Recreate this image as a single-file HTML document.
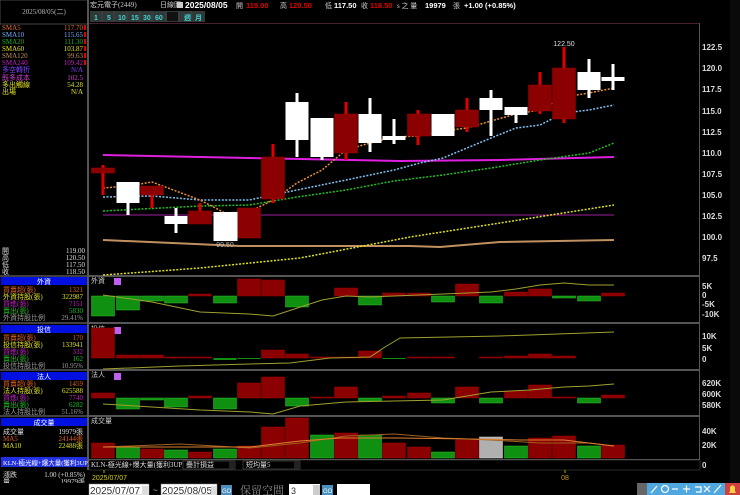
<!DOCTYPE html>
<html><head><meta charset="utf-8"><style>
html,body{margin:0;padding:0;background:#000;width:740px;height:495px;overflow:hidden}
svg{display:block;font-family:"Liberation Sans","Noto Sans CJK TC",sans-serif}
.m{font-family:"Liberation Serif","Noto Sans CJK TC",serif;font-size:7px}
.ax{font-size:8px;fill:#ddd;font-weight:bold}
.hv{font-size:7.5px;font-weight:bold}
</style></head><body>
<svg width="740" height="495" viewBox="0 0 740 495">
<rect width="740" height="495" fill="#000"/>
<rect x="0" y="0" width="88" height="24" fill="#000" stroke="#444" stroke-width="1"/>
<line x1="88" y1="0" x2="88" y2="470" stroke="#555" stroke-width="2"/>
<text x="44" y="14" class="m" fill="#bbb" text-anchor="middle">2025/08/05(二)</text>
<g class="m">
<text x="2" y="30" fill="#e07030">SMA5</text><text x="83" y="30" fill="#e07030" text-anchor="end">117.70</text>
<text x="2" y="37" fill="#70b0ff">SMA10</text><text x="83" y="37" fill="#70b0ff" text-anchor="end">115.65</text>
<text x="2" y="44" fill="#20b020">SMA20</text><text x="83" y="44" fill="#20b020" text-anchor="end">111.30</text>
<text x="2" y="51" fill="#e0e020">SMA60</text><text x="83" y="51" fill="#e0e020" text-anchor="end">103.87</text>
<text x="2" y="58" fill="#c09060">SMA120</text><text x="83" y="58" fill="#c09060" text-anchor="end">99.63</text>
<text x="2" y="65" fill="#c020c0">SMA240</text><text x="83" y="65" fill="#c020c0" text-anchor="end">109.42</text>
<text x="2" y="72" fill="#8040ff">多空轉折</text><text x="83" y="72" fill="#8040ff" text-anchor="end">N/A</text>
<text x="2" y="80" fill="#d040d0">既多成本</text><text x="83" y="80" fill="#d040d0" text-anchor="end">102.5</text>
<text x="2" y="87" fill="#e0e020">多出觸線</text><text x="83" y="87" fill="#e0e020" text-anchor="end">54.28</text>
<text x="2" y="94" fill="#e0e020">出場</text><text x="83" y="94" fill="#e0e020" text-anchor="end">N/A</text>
</g>
<g fill="#e00000"><rect x="84" y="25" width="2" height="5"/><rect x="84" y="32" width="2" height="5"/><rect x="84" y="39" width="2" height="5"/><rect x="84" y="46" width="2" height="5"/><rect x="84" y="53" width="2" height="5"/><rect x="84" y="60" width="2" height="5"/></g>
<g class="m" fill="#ddd">
<text x="2" y="253">開</text><text x="85" y="253" text-anchor="end">119.00</text>
<text x="2" y="260">高</text><text x="85" y="260" text-anchor="end">120.50</text>
<text x="2" y="267">低</text><text x="85" y="267" text-anchor="end">117.50</text>
<text x="2" y="274">收</text><text x="85" y="274" text-anchor="end">118.50</text>
</g>
<line x1="0" y1="276" x2="88" y2="276" stroke="#555" stroke-width="1.5"/>
<g class="m">
<rect x="1" y="277" width="86" height="8" fill="#0010e0"/><text x="44" y="284" fill="#fff" text-anchor="middle">外資</text>
<text x="3" y="292" fill="#e06020">買賣超(張)</text><text x="83" y="292" fill="#e06020" text-anchor="end">1321</text>
<text x="3" y="299" fill="#e0e020">外資持股(張)</text><text x="83" y="299" fill="#e0e020" text-anchor="end">322987</text>
<text x="3" y="306" fill="#c020c0">買進(張)</text><text x="83" y="306" fill="#c020c0" text-anchor="end">7151</text>
<text x="3" y="313" fill="#20c020">賣出(張)</text><text x="83" y="313" fill="#20c020" text-anchor="end">5830</text>
<text x="3" y="320" fill="#999">外資持股比例</text><text x="83" y="320" fill="#999" text-anchor="end">29.41%</text>
<line x1="0" y1="323" x2="88" y2="323" stroke="#555" stroke-width="1.5"/>
<rect x="1" y="325" width="86" height="8" fill="#0010e0"/><text x="44" y="332" fill="#fff" text-anchor="middle">投信</text>
<text x="3" y="340" fill="#e06020">買賣超(張)</text><text x="83" y="340" fill="#e06020" text-anchor="end">170</text>
<text x="3" y="347" fill="#e0e020">投信持股(張)</text><text x="83" y="347" fill="#e0e020" text-anchor="end">133941</text>
<text x="3" y="354" fill="#c020c0">買進(張)</text><text x="83" y="354" fill="#c020c0" text-anchor="end">332</text>
<text x="3" y="361" fill="#20c020">賣出(張)</text><text x="83" y="361" fill="#20c020" text-anchor="end">162</text>
<text x="3" y="368" fill="#999">投信持股比例</text><text x="83" y="368" fill="#999" text-anchor="end">10.95%</text>
<line x1="0" y1="370" x2="88" y2="370" stroke="#555" stroke-width="1.5"/>
<rect x="1" y="372" width="86" height="8" fill="#0010e0"/><text x="44" y="379" fill="#fff" text-anchor="middle">法人</text>
<text x="3" y="386" fill="#e06020">買賣超(張)</text><text x="83" y="386" fill="#e06020" text-anchor="end">1459</text>
<text x="3" y="393" fill="#e0e020">法人持股(張)</text><text x="83" y="393" fill="#e0e020" text-anchor="end">625588</text>
<text x="3" y="400" fill="#c020c0">買進(張)</text><text x="83" y="400" fill="#c020c0" text-anchor="end">7740</text>
<text x="3" y="407" fill="#20c020">賣出(張)</text><text x="83" y="407" fill="#20c020" text-anchor="end">6282</text>
<text x="3" y="414" fill="#999">法人持股比例</text><text x="83" y="414" fill="#999" text-anchor="end">51.16%</text>
<line x1="0" y1="416" x2="88" y2="416" stroke="#555" stroke-width="1.5"/>
<rect x="1" y="418" width="86" height="8" fill="#0010e0"/><text x="44" y="425" fill="#fff" text-anchor="middle">成交量</text>
<text x="3" y="434" fill="#ddd">成交量</text><text x="83" y="434" fill="#ddd" text-anchor="end">19979張</text>
<text x="3" y="441" fill="#e06020">MA5</text><text x="83" y="441" fill="#e06020" text-anchor="end">24144張</text>
<text x="3" y="448" fill="#e0e020">MA10</text><text x="83" y="448" fill="#e0e020" text-anchor="end">22488張</text>
<rect x="1" y="457" width="86" height="10" fill="#2030e0"/><text x="3" y="465" fill="#fff" font-size="6.5">KLN-極光線+爆大量(獲利3UP)</text>
<text x="3" y="477" fill="#ddd">漲跌</text><text x="85" y="477" fill="#ddd" text-anchor="end">1.00 (+0.85%)</text>
<text x="3" y="484" fill="#ddd">量</text><text x="85" y="484" fill="#ddd" text-anchor="end">19979張</text>
</g>
<!-- header -->
<text x="90" y="7" class="m" fill="#ccc">宏元電子(2449)</text>
<text x="160" y="7" class="m" fill="#ccc">日線圖</text>
<rect x="177" y="2" width="6" height="6" fill="#ccc"/>
<text x="185" y="8" font-size="8.5" font-weight="bold" fill="#fff">2025/08/05</text>
<text x="236" y="8" class="m" fill="#ccc">開</text><text x="246" y="8" class="hv" fill="#e00000">119.00</text>
<text x="280" y="8" class="m" fill="#ccc">高</text><text x="289" y="8" class="hv" fill="#e00000">120.50</text>
<text x="325" y="8" class="m" fill="#ccc">低</text><text x="334" y="8" class="hv" fill="#fff">117.50</text>
<text x="361" y="8" class="m" fill="#ccc">收</text><text x="370" y="8" class="hv" fill="#e00000">118.50</text>
<text x="397" y="8" class="m" fill="#ccc">s 之 量</text><text x="425" y="8" class="hv" fill="#fff">19979</text>
<text x="453" y="8" class="m" fill="#ccc">張</text><text x="464" y="8" class="hv" fill="#fff">+1.00 (+0.85%)</text>
<g font-size="7" font-weight="bold" fill="#40d0d0">
<rect x="90" y="11" width="115" height="11" fill="#303838"/>
<text x="94" y="20">1</text><text x="107" y="20">5</text><text x="118" y="20">10</text><text x="131" y="20">15</text><text x="143" y="20">30</text><text x="155" y="20">60</text>
<rect x="167" y="12" width="11" height="9" fill="#111"/><text x="184" y="20">週</text><text x="195" y="20">月</text>
</g>
<g stroke="#555" stroke-width="0.5"><line x1="102" y1="11" x2="102" y2="22"/><line x1="114" y1="11" x2="114" y2="22"/><line x1="127" y1="11" x2="127" y2="22"/><line x1="140" y1="11" x2="140" y2="22"/><line x1="152" y1="11" x2="152" y2="22"/><line x1="166" y1="11" x2="166" y2="22"/><line x1="179" y1="11" x2="179" y2="22"/><line x1="191" y1="11" x2="191" y2="22"/></g>
<line x1="89" y1="23.5" x2="700" y2="23.5" stroke="#4a2030" stroke-width="1"/>
<line x1="699.5" y1="23" x2="699.5" y2="470" stroke="#555" stroke-width="1"/>
<rect x="730" y="0" width="10" height="483" fill="#0a0a0a"/>
<g fill="#555"><rect x="89" y="275" width="611" height="2"/><rect x="89" y="322" width="611" height="2"/><rect x="89" y="369" width="611" height="2"/><rect x="89" y="415" width="611" height="2"/><rect x="89" y="459" width="611" height="1.5"/></g>
<g class="ax"><text x="702" y="50">122.5</text><text x="702" y="71">120.0</text><text x="702" y="92">117.5</text><text x="702" y="114">115.0</text><text x="702" y="135">112.5</text><text x="702" y="156">110.0</text><text x="702" y="177">107.5</text><text x="702" y="198">105.0</text><text x="702" y="219">102.5</text><text x="702" y="240">100.0</text><text x="702" y="261">97.5</text>
<text x="702" y="289">5K</text><text x="702" y="298">0</text><text x="702" y="307">-5K</text><text x="702" y="317">-10K</text>
<text x="702" y="339">10K</text><text x="702" y="351">5K</text><text x="702" y="362">0</text>
<text x="702" y="386">620K</text><text x="702" y="397">600K</text><text x="702" y="408">580K</text>
<text x="702" y="434">40K</text><text x="702" y="448">20K</text><text x="702" y="468">0</text></g>
<polyline points="103,155 300,159 400,161 500,160 614,157" fill="none" stroke="#e020e0" stroke-width="2"/>
<line x1="103" y1="215" x2="614" y2="215" stroke="#a020a0" stroke-width="1"/>
<polyline points="103,240 240,246 300,246 410,246 440,247 500,242 614,240" fill="none" stroke="#c09060" stroke-width="2"/>
<polyline points="103,275 200,268 300,258 410,237 500,223 614,205" fill="none" stroke="#e0e020" stroke-width="1.5" stroke-dasharray="2 1.5"/>
<polyline points="103,211 200,206 249,205 297,197 346,190 394,181 443,175 491,168 540,160 589,153 614,143" fill="none" stroke="#20c020" stroke-width="1.5" stroke-dasharray="2 1.5"/>
<polyline points="103,197 152,196 200,200 249,200 297,190 346,180 394,170 420,163 443,158 491,138 516,128 540,125 564,113 589,110 614,105" fill="none" stroke="#80c0f0" stroke-width="1.5" stroke-dasharray="2 1.5"/>
<polyline points="103,188 128,186 152,182 200,200 225,213 249,212 273,200 297,183 322,170 346,150 370,143 394,137 418,136 443,131 467,128 491,121 516,114 540,110 564,97 589,93 614,88" fill="none" stroke="#f09030" stroke-width="1.5" stroke-dasharray="2 1.5"/>
<g fill="#e00000">
<rect x="101.5" y="165" width="3" height="30"/><rect x="150.5" y="186" width="3" height="22"/><rect x="198.5" y="203" width="3" height="21"/>
<rect x="271.5" y="144" width="3" height="59"/><rect x="344.5" y="102" width="3" height="58"/><rect x="416.5" y="110" width="3" height="35"/>
<rect x="465.5" y="98" width="3" height="34"/><rect x="538.5" y="72" width="3" height="42"/><rect x="562.5" y="47" width="3" height="76"/>
</g>
<g fill="#8b0000" stroke="#a00000" stroke-width="0.5">
<rect x="91.5" y="168" width="23" height="5"/><rect x="140.5" y="186" width="23" height="9"/><rect x="188.5" y="211" width="23" height="13"/>
<rect x="237.5" y="208" width="23" height="30"/><rect x="261.5" y="157" width="23" height="42"/><rect x="334.5" y="114" width="23" height="39"/>
<rect x="407.5" y="114" width="23" height="22"/><rect x="455.5" y="110" width="23" height="17"/><rect x="528.5" y="85" width="23" height="26"/><rect x="552.5" y="68" width="23" height="51"/>
</g>
<g fill="#fff">
<rect x="126.5" y="182" width="3" height="33"/><rect x="174.5" y="208" width="3" height="25"/><rect x="295.5" y="93" width="3" height="64"/><rect x="320.5" y="118" width="3" height="42"/>
<rect x="368.5" y="98" width="3" height="54"/><rect x="392.5" y="119" width="3" height="25"/><rect x="489.5" y="90" width="3" height="46"/><rect x="514.5" y="107" width="3" height="16"/>
<rect x="587.5" y="59" width="3" height="39"/><rect x="611.5" y="64" width="3" height="26"/>
<rect x="116.5" y="182" width="23" height="21"/><rect x="164.5" y="216" width="23" height="8"/><rect x="213.5" y="212" width="24" height="29"/>
<rect x="285.5" y="102" width="23" height="38"/><rect x="310.5" y="118" width="23" height="39"/><rect x="358.5" y="114" width="23" height="29"/>
<rect x="382.5" y="136" width="23" height="4"/><rect x="431.5" y="114" width="23" height="22"/><rect x="479.5" y="98" width="23" height="12"/>
<rect x="504.5" y="107" width="23" height="8"/><rect x="577.5" y="72" width="23" height="18"/><rect x="601.5" y="77" width="23" height="4"/>
</g>
<text x="225" y="247" font-size="7" fill="#bbb" text-anchor="middle">99.50</text>
<text x="564" y="46" font-size="7" fill="#ddd" text-anchor="middle">122.50</text>
<g class="m" fill="#ccc"><text x="91" y="283">外資</text><text x="91" y="331">投信</text><text x="91" y="377">法人</text><text x="91" y="423">成交量</text></g>
<g fill="#c060f0"><rect x="114" y="278" width="7" height="7"/><rect x="114" y="327" width="7" height="7"/><rect x="114" y="373" width="7" height="7"/></g>
<g fill="#109010" stroke="#30c030" stroke-width="0.5">
<rect x="91.5" y="296" width="23" height="20"/><rect x="116.5" y="296" width="23" height="14"/><rect x="140.5" y="296" width="23" height="5"/><rect x="164.5" y="296" width="23" height="7"/>
<rect x="213.5" y="296" width="23" height="7"/><rect x="285.5" y="296" width="23" height="11"/><rect x="358.5" y="296" width="23" height="9"/><rect x="431.5" y="296" width="23" height="6"/><rect x="479.5" y="296" width="23" height="7"/><rect x="552.5" y="296" width="23" height="2"/><rect x="577.5" y="296" width="23" height="5"/>
</g>
<g fill="#8b0000" stroke="#a00000" stroke-width="0.5">
<rect x="188.5" y="294" width="23" height="2"/><rect x="237.5" y="279" width="23" height="17"/><rect x="261.5" y="280" width="23" height="16"/><rect x="334.5" y="288" width="23" height="8"/>
<rect x="382.5" y="293" width="23" height="3"/><rect x="407.5" y="293" width="23" height="3"/><rect x="455.5" y="284" width="23" height="12"/><rect x="504.5" y="292" width="23" height="4"/><rect x="528.5" y="289" width="23" height="7"/><rect x="601.5" y="293" width="23" height="3"/>
</g>
<polyline points="103,295 152,302 200,312 249,314 273,316 322,300 346,296 370,297 394,296 443,294 467,293 491,292 516,289 540,285 564,283 589,285 614,285" fill="none" stroke="#a0a030" stroke-width="1"/>
<g fill="#8b0000" stroke="#a00000" stroke-width="0.5">
<rect x="91.5" y="328" width="23" height="30"/><rect x="116.5" y="355" width="23" height="3"/><rect x="140.5" y="355" width="23" height="3"/><rect x="164.5" y="357" width="23" height="1"/><rect x="188.5" y="357" width="23" height="1"/>
<rect x="261.5" y="350" width="23" height="8"/><rect x="285.5" y="354" width="23" height="4"/><rect x="310.5" y="357" width="23" height="1"/><rect x="334.5" y="357" width="23" height="1"/><rect x="358.5" y="351" width="23" height="7"/>
<rect x="407.5" y="357" width="23" height="1"/><rect x="431.5" y="357" width="23" height="1"/><rect x="479.5" y="357" width="23" height="1"/><rect x="504.5" y="356" width="23" height="2"/><rect x="528.5" y="354" width="23" height="4"/><rect x="552.5" y="356" width="23" height="2"/>
</g>
<g fill="#109010"><rect x="213.5" y="358" width="23" height="2"/><rect x="237.5" y="358" width="23" height="1"/><rect x="382.5" y="358" width="23" height="1"/></g>
<polyline points="103,369 180,366 250,364 290,363 330,358 370,357 385,347 400,338 500,336 614,332" fill="none" stroke="#a0a030" stroke-width="1"/>
<g fill="#8b0000" stroke="#a00000" stroke-width="0.5">
<rect x="91.5" y="393" width="23" height="5"/><rect x="188.5" y="396" width="23" height="2"/><rect x="237.5" y="383" width="23" height="15"/><rect x="261.5" y="377" width="23" height="21"/><rect x="310.5" y="397" width="23" height="1"/>
<rect x="334.5" y="387" width="23" height="11"/><rect x="382.5" y="396" width="23" height="2"/><rect x="407.5" y="393" width="23" height="5"/><rect x="455.5" y="387" width="23" height="11"/><rect x="504.5" y="391" width="23" height="7"/><rect x="528.5" y="385" width="23" height="13"/><rect x="552.5" y="397" width="23" height="1"/><rect x="601.5" y="395" width="23" height="3"/>
</g>
<g fill="#109010" stroke="#30c030" stroke-width="0.5">
<rect x="116.5" y="398" width="23" height="11"/><rect x="140.5" y="398" width="23" height="2"/><rect x="164.5" y="398" width="23" height="9"/><rect x="213.5" y="398" width="23" height="11"/><rect x="285.5" y="398" width="23" height="8"/>
<rect x="358.5" y="398" width="23" height="3"/><rect x="431.5" y="398" width="23" height="5"/><rect x="479.5" y="398" width="23" height="5"/><rect x="577.5" y="398" width="23" height="5"/>
</g>
<polyline points="103,404 152,407 200,410 250,412 273,414 300,406 346,402 394,401 443,400 467,396 491,392 530,390 564,387 589,386 614,384" fill="none" stroke="#a0a030" stroke-width="1"/>
<g fill="#8b0000" stroke="#a00000" stroke-width="0.5">
<rect x="91.5" y="443" width="23" height="15"/><rect x="140.5" y="449" width="23" height="9"/><rect x="188.5" y="452" width="23" height="6"/><rect x="237.5" y="446" width="23" height="12"/><rect x="261.5" y="427" width="23" height="31"/><rect x="285.5" y="418" width="23" height="40"/>
<rect x="334.5" y="433" width="23" height="25"/><rect x="382.5" y="443" width="23" height="15"/><rect x="407.5" y="447" width="23" height="11"/><rect x="455.5" y="440" width="23" height="18"/><rect x="528.5" y="438" width="23" height="20"/><rect x="552.5" y="436" width="23" height="22"/><rect x="601.5" y="445" width="23" height="13"/>
</g>
<g fill="#109010" stroke="#30c030" stroke-width="0.5">
<rect x="116.5" y="447" width="23" height="11"/><rect x="164.5" y="450" width="23" height="8"/><rect x="213.5" y="449" width="23" height="9"/><rect x="310.5" y="435" width="23" height="23"/><rect x="358.5" y="435" width="23" height="23"/><rect x="431.5" y="452" width="23" height="6"/><rect x="504.5" y="446" width="23" height="12"/><rect x="577.5" y="446" width="23" height="12"/>
</g>
<rect x="479.5" y="437" width="23" height="21" fill="#b0b0b0" stroke="#ddd" stroke-width="0.5"/>
<polyline points="103,447 180,444 250,448 300,443 346,436 394,434 443,438 491,440 540,443 589,443 614,446" fill="none" stroke="#a06020" stroke-width="1"/>
<polyline points="103,447 200,447 250,447 300,441 340,438 400,438 470,439 520,440 564,440 614,446" fill="none" stroke="#e08030" stroke-width="1"/>
<rect x="89" y="460" width="611" height="10" fill="#000" stroke="#555" stroke-width="0.5"/>
<text x="91" y="467" class="m" fill="#ddd">KLN-極光線+爆大量(獲利3UP)</text>
<rect x="183" y="461" width="52" height="8" fill="#000" stroke="#666" stroke-width="0.5"/><text x="186" y="467" class="m" fill="#ddd">疊計損益</text><rect x="229" y="461" width="6" height="8" fill="#222"/>
<rect x="243" y="461" width="57" height="8" fill="#000" stroke="#666" stroke-width="0.5"/><text x="246" y="467" class="m" fill="#ddd">短均量5</text><rect x="294" y="461" width="6" height="8" fill="#222"/>
<line x1="104" y1="470" x2="104" y2="473" stroke="#aa0"/><text x="92" y="480" font-size="7" fill="#d0d020">2025/07/07</text>
<line x1="565" y1="470" x2="565" y2="473" stroke="#aa0"/><text x="565" y="480" font-size="7" fill="#c0a020" text-anchor="middle">08</text>
<rect x="0" y="483" width="740" height="12" fill="#000"/>
<rect x="89" y="484" width="60" height="11" fill="#fff" stroke="#888" stroke-width="0.5"/><text x="90" y="494" font-size="10" fill="#333">2025/07/07</text><rect x="142" y="486" width="6" height="8" fill="#ddd"/>
<text x="153" y="493" font-size="8" fill="#ccc">~</text>
<rect x="161" y="484" width="56" height="11" fill="#fff" stroke="#888" stroke-width="0.5"/><text x="162" y="494" font-size="10" fill="#333">2025/08/05</text><rect x="211" y="486" width="6" height="8" fill="#ddd"/>
<rect x="221" y="485" width="11" height="10" fill="#4a90c0"/><text x="222" y="493" font-size="6" fill="#fff">GO</text>
<text x="240" y="494" font-size="11" fill="#888" font-family="Liberation Serif,Noto Serif CJK SC,serif">保留空間</text>
<rect x="289" y="484" width="31" height="11" fill="#fff"/><text x="291" y="494" font-size="9" fill="#333">3</text><rect x="313" y="485" width="7" height="10" fill="#ccc"/>
<rect x="322" y="485" width="11" height="10" fill="#4a90c0"/><text x="323" y="493" font-size="6" fill="#fff">GO</text>
<rect x="337" y="484" width="33" height="11" fill="#fff"/>
<rect x="637" y="483" width="103" height="12" fill="#50a8e0"/>
<rect x="637" y="483" width="10" height="12" fill="#666"/>
<rect x="725" y="483" width="15" height="12" fill="#d04040"/>
<g stroke="#fff" stroke-width="1.2" fill="none"><line x1="651" y1="493" x2="657" y2="486"/><circle cx="665" cy="489" r="3.5"/><line x1="672" y1="489" x2="678" y2="489"/><line x1="683" y1="489" x2="690" y2="489"/><line x1="686.5" y1="485.5" x2="686.5" y2="492.5"/><path d="M695 487 h6 v5 h-5"/><path d="M704 486 l6 6 M710 486 l-6 6"/><line x1="714" y1="493" x2="721" y2="485"/></g>
<path d="M729 493 h7 l-1 -2 v-3 a2.5 2.5 0 0 0 -5 0 v3 z" fill="#ffd040"/>
</svg>
</body></html>
